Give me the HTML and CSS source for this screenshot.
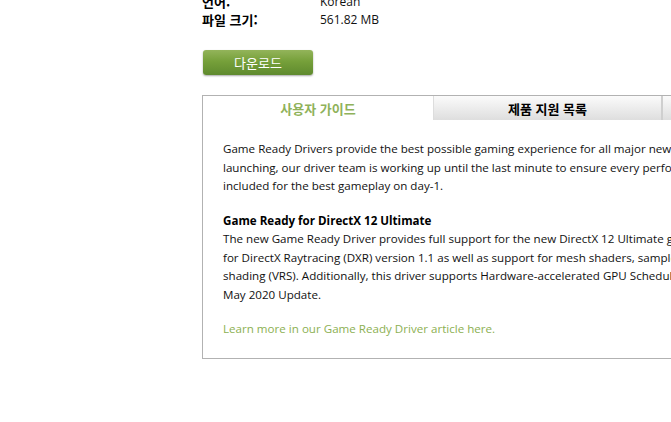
FILE: index.html
```html
<!DOCTYPE html>
<html lang="ko">
<head>
<meta charset="utf-8">
<link rel="stylesheet" href="styles.css">
</head>
<body>
<div class="page">
  <div class="info">
    <div class="row"><span class="label">언어:</span><span class="value">Korean</span></div>
    <div class="row"><span class="label">파일 크기:</span><span class="value">561.82 MB</span></div>
  </div>
  <a class="btn" href="#">다운로드</a>
  <div class="box">
    <div class="tabs">
      <div class="tab active">사용자 가이드</div>
      <div class="tab t2">제품 지원 목록</div>
      <div class="tab t3">추가 정보</div>
    </div>
    <div class="content">
      <p>Game Ready Drivers provide the best possible gaming experience for all major new releases. Prior to a new title<br>launching, our driver team is working up until the last minute to ensure every performance tweak and bug fix is<br>included for the best gameplay on day-1.</p>
      <p><b>Game Ready for DirectX 12 Ultimate</b><br>The new Game Ready Driver provides full support for the new DirectX 12 Ultimate graphics API on Windows 10, including support<br>for DirectX Raytracing (DXR) version 1.1 as well as support for mesh shaders, sampler feedback, and variable rate<br>shading (VRS). Additionally, this driver supports Hardware-accelerated GPU Scheduling, a new feature in the Windows 10<br>May 2020 Update.</p>
      <p><a class="link" href="#">Learn more in our Game Ready Driver article here.</a></p>
    </div>
  </div>
</div>
</body>
</html>
```
FILE: styles.css
```css
html, body { margin: 0; padding: 0; overflow: hidden; background: #fff; }
body { width: 671px; height: 422px; }
.page {
  padding-left: 202px;
  margin-top: -7px;
  font-family: "Open Sans", "Noto Sans CJK KR", sans-serif;
  font-size: 11.6px;
  color: #111;
}
.info { display: flex; flex-direction: column; }
.row { display: flex; height: 18px; line-height: 18px; }
.label { width: 118px; font-weight: bold; font-family: "Noto Sans CJK KR", sans-serif; font-size: 13px; color: #000; }
.value { color: #111; font-size: 12px; }
.btn {
  display: block;
  margin: 21px 0 0 1px;
  width: 110px;
  height: 25px;
  line-height: 25px;
  text-align: center;
  color: #fff;
  text-decoration: none;
  font-family: "Noto Sans CJK KR", sans-serif;
  font-size: 13px;
  border-radius: 3px;
  background: linear-gradient(#93b45a, #76a03a 45%, #5f8a2e);
  box-shadow: 0 1px 2px rgba(0,0,0,0.35);
}
.box {
  margin-top: 20px;
  width: 720px;
  height: 264px;
  border: 1px solid #b2b2b2;
  border-right: none;
  box-sizing: border-box;
}
.tabs { display: flex; height: 24px; }
.tab {
  display: flex; align-items: center; justify-content: center;
  font-family: "Noto Sans CJK KR", sans-serif;
  font-size: 13px;
  font-weight: bold;
}
.tab.active { width: 230px; color: #8fb25a; background: #fff; border-right: 1px solid #ddd; }
.tab.t2 { width: 227px; color: #000; background: linear-gradient(#fbfbfb, #dedede); border-right: 2px solid #cfcfcf; }
.tab.t3 { flex: 1; color: #000; background: linear-gradient(#fbfbfb, #dedede); }
.content { padding: 20px 0 0 20px; }
.content p { margin: 0 0 16px; line-height: 18.5px; white-space: nowrap; }
.content b { font-weight: bold; color: #000; }
.link { color: #8cb052; text-decoration: none; }
```
